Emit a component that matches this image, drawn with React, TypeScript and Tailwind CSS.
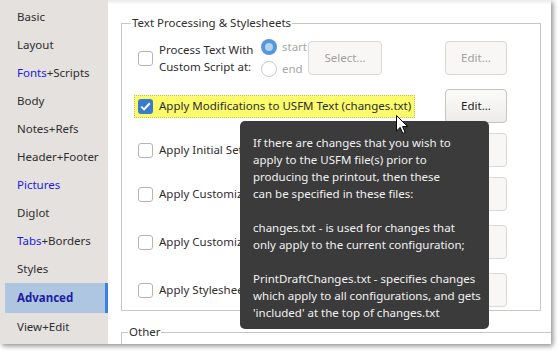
import React from "react";

// ── Sidebar pages ──
type NavItem = { parts: { text: string; blue?: boolean }[]; active?: boolean };

const NAV: NavItem[] = [
  { parts: [{ text: "Basic" }] },
  { parts: [{ text: "Layout" }] },
  { parts: [{ text: "Fonts", blue: true }, { text: "+Scripts" }] },
  { parts: [{ text: "Body" }] },
  { parts: [{ text: "Notes+Refs" }] },
  { parts: [{ text: "Header+Footer" }] },
  { parts: [{ text: "Pictures", blue: true }] },
  { parts: [{ text: "Diglot" }] },
  { parts: [{ text: "Tabs", blue: true }, { text: "+Borders" }] },
  { parts: [{ text: "Styles" }] },
  { parts: [{ text: "Advanced" }], active: true },
  { parts: [{ text: "View+Edit" }] },
];

const TIP_LINES = [
  "If there are changes that you wish to",
  "apply to the USFM file(s) prior to",
  "producing the printout, then these",
  "can be specified in these files:",
  "",
  "changes.txt - is used for changes that",
  "only apply to the current configuration;",
  "",
  "PrintDraftChanges.txt - specifies changes",
  "which apply to all configurations, and gets",
  "'included' at the top of changes.txt",
];

function Checkbox({ checked = false }: { checked?: boolean }) {
  if (checked) {
    return (
      <span className="flex h-[15px] w-[15px] shrink-0 items-center justify-center rounded-[3px] bg-[#3a7bd0]">
        <svg width="11" height="9" viewBox="0 0 11 9">
          <path d="M1.2 4.6 L4.1 7.4 L9.8 1.3" fill="none" stroke="#fff" strokeWidth="2" />
        </svg>
      </span>
    );
  }
  return <span className="h-[15px] w-[15px] shrink-0 rounded-[3px] border border-[#b9b4af] bg-white" />;
}

function Button({ label, disabled = false, width }: { label: string; disabled?: boolean; width: string }) {
  return (
    <div
      className={
        disabled
          ? `${width} flex h-[34px] shrink-0 items-center justify-center rounded-[4px] border border-[#dcd8d4] bg-[#f8f7f5] text-[#a39f9b]`
          : `${width} flex h-[34px] shrink-0 items-center justify-center rounded-[4px] border border-[#c6c2be] bg-gradient-to-b from-[#fbfbfa] to-[#eeecea] text-[#222]`
      }
    >
      {label}
    </div>
  );
}

// label is partly hidden behind the tooltip, so it is clipped where the tooltip starts
function OptionRow({ label, mt }: { label: string; mt: string }) {
  return (
    <div className={`${mt} flex h-[34px] items-center pl-[16px] pr-[33px]`}>
      <Checkbox />
      <span className="ml-[6px] w-[81px] overflow-hidden whitespace-nowrap">{label}</span>
      <div className="ml-auto">
        <Button label="" disabled width="w-[62px]" />
      </div>
    </div>
  );
}

export default function App() {
  return (
    <div className="relative h-[353px] w-[560px] bg-white font-['Noto_Sans',sans-serif] text-[11.5px] text-[#2e2e2e]">
      <div className="relative flex h-[344px] w-[551px] overflow-hidden bg-white shadow-[2px_2px_5px_rgba(0,0,0,0.45)]">
        {/* Sidebar */}
        <aside className="w-[108px] shrink-0 bg-[#e4e1de] pt-[3px]">
          {NAV.map((item) => (
            <div
              key={item.parts.map((p) => p.text).join("")}
              className={
                item.active
                  ? "ml-[5px] flex h-[30px] items-center border-r-[3px] border-[#3b82e0] bg-[#afc6e0] pl-[12px] font-bold text-[#1c1ca6]"
                  : "flex h-[28px] items-center pl-[17px]"
              }
            >
              {item.parts.map((p) => (
                <span key={p.text} className={p.blue ? "text-[#1b1be0]" : ""}>
                  {p.text}
                </span>
              ))}
            </div>
          ))}
        </aside>

        {/* Content */}
        <main className="relative flex-1 bg-[linear-gradient(to_bottom,#ebebeb_0px,#ffffff_5px)] pt-[15px]">
          <fieldset className="ml-[13px] w-[420px] border border-[#cbc6c1] pb-[3px]">
            <legend className="ml-[9px] px-[1px] leading-[16px]">Text Processing &amp; Stylesheets</legend>

            {/* Custom script */}
            <div className="mt-[10px] flex h-[34px] items-center pl-[16px] pr-[33px]">
              <Checkbox />
              <div className="ml-[6px] w-[102px] leading-[17px]">
                <div>Process Text With</div>
                <div>Custom Script at:</div>
              </div>
              <div className="flex w-[47px] flex-col gap-[6px] text-[#a8a6a4]">
                <div className="flex h-[16px] items-center gap-[5px]">
                  <span className="flex h-[16px] w-[16px] items-center justify-center rounded-full bg-[#5596df]">
                    <span className="h-[8px] w-[8px] rounded-full bg-[#b6d2f2]" />
                  </span>
                  start
                </div>
                <div className="flex h-[16px] items-center gap-[5px]">
                  <span className="h-[16px] w-[16px] rounded-full border border-[#cdc9c5] bg-white" />
                  end
                </div>
              </div>
              <Button label="Select..." disabled width="w-[74px]" />
              <div className="ml-auto">
                <Button label="Edit..." disabled width="w-[62px]" />
              </div>
            </div>

            {/* Changes row */}
            <div className="mt-[14px] flex h-[34px] items-center pl-[12px] pr-[33px]">
              <div className="flex h-[23px] items-center border border-dotted border-[#bdbd7a] bg-[#fbfb6c] pl-[3px] pr-[3px]">
                <Checkbox checked />
                <span className="ml-[6px] whitespace-nowrap">Apply Modifications to USFM Text (changes.txt)</span>
              </div>
              <div className="ml-auto">
                <Button label="Edit..." width="w-[62px]" />
              </div>
            </div>

            <OptionRow label="Apply Initial Settings" mt="mt-[10px]" />
            <OptionRow label="Apply Customizations" mt="mt-[10px]" />
            <OptionRow label="Apply Customizations" mt="mt-[14px]" />
            <OptionRow label="Apply Stylesheets" mt="mt-[14px]" />
          </fieldset>

          <fieldset className="ml-[13px] mt-[13px] h-[40px] w-[440px] border border-[#cbc6c1]">
            <legend className="ml-[6px] px-[1px] leading-[16px]">Other</legend>
          </fieldset>
        </main>

        {/* Tooltip */}
        <div className="absolute left-[240px] top-[121px] h-[208px] w-[249px] rounded-[5px] bg-[#3b3b3b] pl-[13px] pt-[13px] text-[#f2f2f2]">
          {TIP_LINES.map((line, i) => (
            <div key={i} className="h-[17px] whitespace-nowrap leading-[17px]">
              {line}
            </div>
          ))}
        </div>

        {/* Mouse cursor */}
        <svg className="absolute left-[396px] top-[115px]" width="13" height="20" viewBox="0 0 13 20">
          <path
            d="M0.5 0.5 L0.5 16 L4.2 12.4 L6.8 18.4 L9.2 17.4 L6.6 11.6 L11.6 11.6 Z"
            fill="#fff"
            stroke="#000"
            strokeWidth="1"
            strokeLinejoin="round"
          />
        </svg>
      </div>
    </div>
  );
}
